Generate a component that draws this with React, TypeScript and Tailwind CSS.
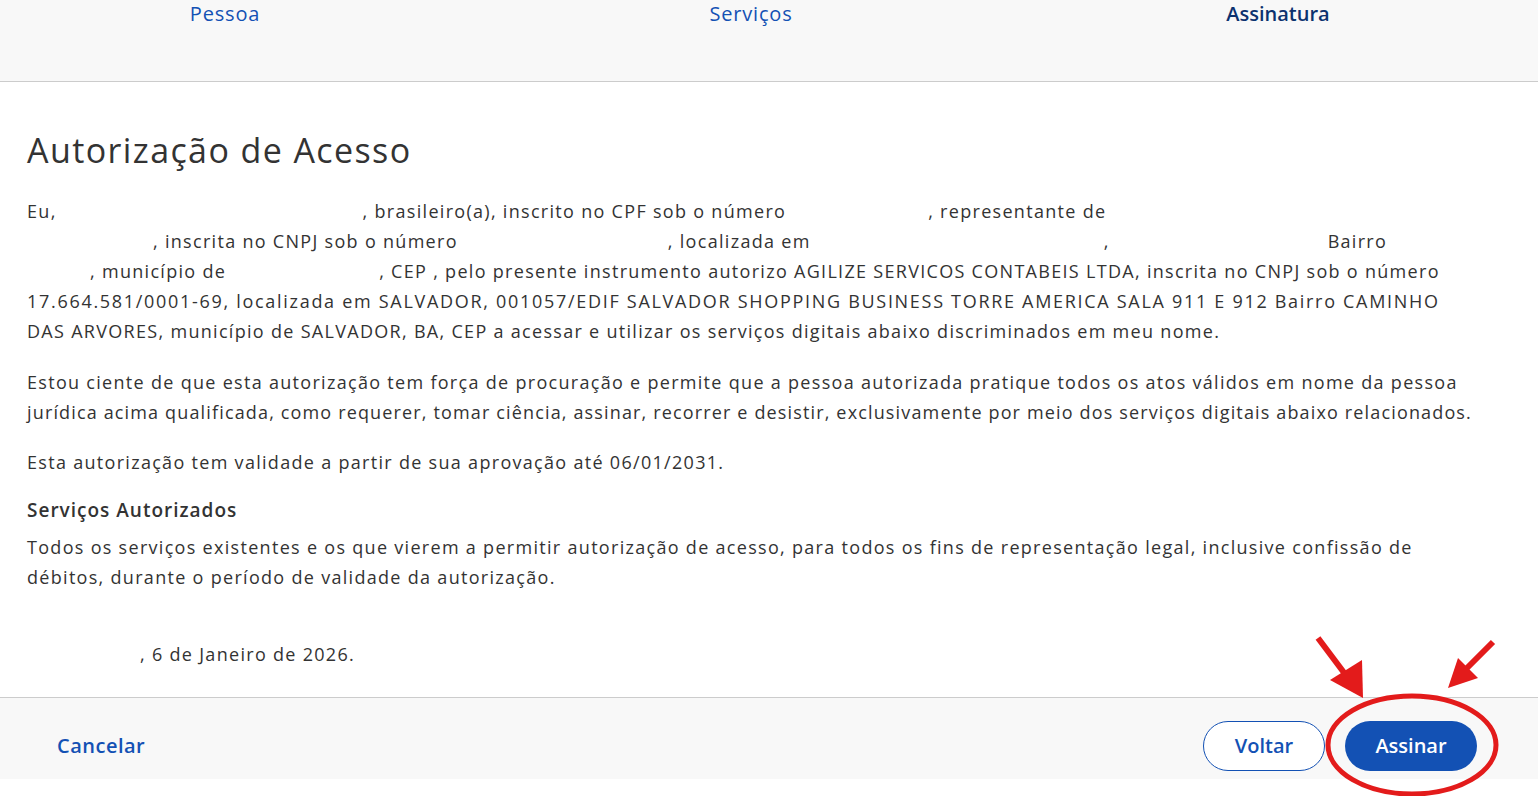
import React from 'react';

const Blank = ({ w }: { w: number }) => (
  <span className="inline-block" style={{ width: w }} />
);

export default function App() {
  return (
    <div className="relative min-h-[796px] bg-white font-['Open_Sans',sans-serif] text-[#333333]">
      {/* steps bar */}
      <div className="h-[82px] border-b border-[#cccccc] bg-[#f8f8f8]">
        <div className="flex text-[20px] leading-[28px]">
          <div className="w-[450px] text-center tracking-[0.8px] text-[#1351b4]">Pessoa</div>
          <div className="w-[602px] text-center tracking-[0.8px] text-[#1351b4]">Serviços</div>
          <div className="w-[452px] text-center font-semibold text-[#0c326f]">Assinatura</div>
        </div>
      </div>

      <main className="px-[27px] pt-[48px]">
        <h1 className="mb-[25px] text-[34px] leading-[41px] font-normal tracking-[1.4px]">Autorização de Acesso</h1>

        <div className="text-[18px] leading-[30px] tracking-[1.3px] whitespace-nowrap">
          <div className="flex">
            <span>Eu,</span>
            <Blank w={306} />
            <span>, brasileiro(a), inscrito no CPF sob o número</span>
            <Blank w={142} />
            <span>, representante de</span>
          </div>
          <div className="flex">
            <Blank w={126} />
            <span>, inscrita no CNPJ sob o número</span>
            <Blank w={210} />
            <span>, localizada em</span>
            <Blank w={293} />
            <span>,</span>
            <Blank w={218} />
            <span>Bairro</span>
          </div>
          <div className="flex">
            <Blank w={63} />
            <span>, município de</span>
            <Blank w={153} />
            <span>, CEP , pelo presente instrumento autorizo AGILIZE SERVICOS CONTABEIS LTDA, inscrita no CNPJ sob o número</span>
          </div>
          <div className="tracking-[1.7px]">
            17.664.581/0001-69, localizada em SALVADOR, 001057/EDIF SALVADOR SHOPPING BUSINESS TORRE AMERICA SALA 911 E 912 Bairro CAMINHO
          </div>
          <div>
            DAS ARVORES, município de SALVADOR, BA, CEP a acessar e utilizar os serviços digitais abaixo discriminados em meu nome.
          </div>

          <p className="mt-[21px]">
            Estou ciente de que esta autorização tem força de procuração e permite que a pessoa autorizada pratique todos os atos válidos em nome da pessoa
            <br />
            <span className="tracking-[1.15px]">
              jurídica acima qualificada, como requerer, tomar ciência, assinar, recorrer e desistir, exclusivamente por meio dos serviços digitais abaixo relacionados.
            </span>
          </p>

          <p className="mt-[20px]">Esta autorização tem validade a partir de sua aprovação até 06/01/2031.</p>

          <h2 className="mt-[18px] mb-[7px] text-[19px] font-semibold tracking-[1px]">Serviços Autorizados</h2>
          <p>
            Todos os serviços existentes e os que vierem a permitir autorização de acesso, para todos os fins de representação legal, inclusive confissão de
            <br />
            débitos, durante o período de validade da autorização.
          </p>

          <div className="mt-[47px] flex">
            <Blank w={113} />
            <span>, 6 de Janeiro de 2026.</span>
          </div>
        </div>
      </main>

      {/* footer actions */}
      <footer className="mt-[28px] flex h-[82px] items-center justify-between border-t border-[#cccccc] bg-[#f8f8f8] pt-[15px] pr-[61px] pl-[57px]">
        <button className="text-[20px] font-semibold tracking-[0.5px] text-[#1351b4]">Cancelar</button>
        <div className="flex gap-[20px]">
          <button className="h-[50px] w-[122px] rounded-full border border-[#1351b4] bg-white text-[20px] font-semibold text-[#1351b4]">
            Voltar
          </button>
          <button className="h-[50px] w-[132px] rounded-full bg-[#1351b4] text-[20px] font-semibold text-white">
            Assinar
          </button>
        </div>
      </footer>
      <div className="h-[16px] bg-white" />

      {/* red annotation */}
      <svg className="pointer-events-none absolute top-[630px] left-[1300px]" width="238" height="166" viewBox="0 0 238 166">
        <ellipse cx="112" cy="115" rx="84" ry="49" fill="none" stroke="#e31b1b" strokeWidth="5" />
        <line x1="18" y1="8" x2="48" y2="48" stroke="#e31b1b" strokeWidth="6" />
        <polygon points="30,50 62,30 63,68" fill="#e31b1b" />
        <line x1="193" y1="12" x2="165" y2="40" stroke="#e31b1b" strokeWidth="6" />
        <polygon points="148,58 158,28 178,48" fill="#e31b1b" />
      </svg>
    </div>
  );
}
